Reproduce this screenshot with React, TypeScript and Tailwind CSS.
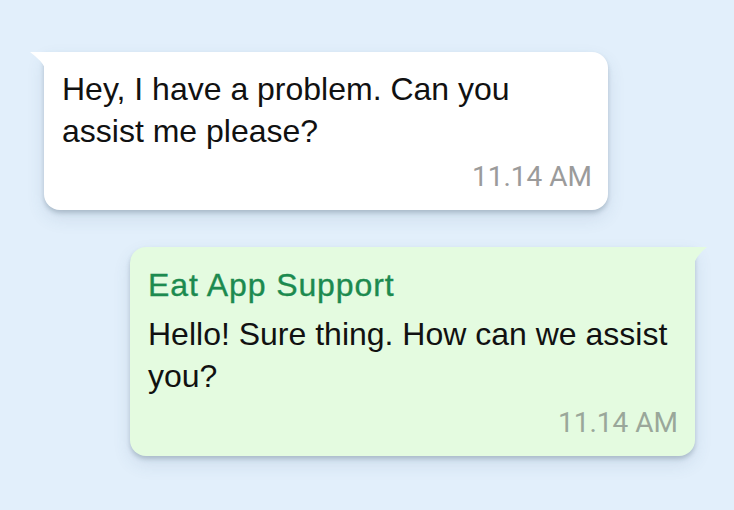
import React from "react";

export default function App() {
  return (
    <div className="w-[734px] h-[510px] bg-[#e2effb] flex flex-col overflow-hidden" style={{ fontFamily: '"Liberation Sans", Arial, sans-serif' }}>
      <div className="relative ml-[44px] mt-[52px] w-[564px] h-[158px] bg-white rounded-[16px] rounded-tl-none shadow-[0_3px_4px_rgba(60,80,100,0.25),0_8px_18px_rgba(60,90,120,0.12)] pl-[18px] pr-[16px] pt-[16px]">
        <svg className="absolute left-[-14px] top-0" width="15" height="16" viewBox="0 0 15 16">
          <path d="M0 0 H15 V16 Q12 9 0 0 Z" fill="#ffffff" />
        </svg>
        <div className="text-[32px] leading-[42px] text-[#111]">Hey, I have a problem. Can you<br />assist me please?</div>
        <div className="flex justify-end mt-[10px] text-[28px] leading-[30px] text-[#9b9b9b]" style={{ fontFamily: 'Roboto, sans-serif' }}>11.14 AM</div>
      </div>
      <div className="relative ml-[130px] mt-[37px] w-[565px] h-[209px] bg-[#e4fbe0] rounded-[16px] rounded-tr-none shadow-[0_3px_4px_rgba(60,80,100,0.25),0_8px_18px_rgba(60,90,120,0.12)] pl-[18px] pr-[17px] pt-[17px]">
        <svg className="absolute right-[-12px] top-0" width="13" height="16" viewBox="0 0 13 16">
          <path d="M0 0 H13 Q4 7 0 16 Z" fill="#e4fbe0" />
        </svg>
        <div className="text-[32px] leading-[42px] tracking-[0.9px] text-[#1c8a4f] [-webkit-text-stroke:0.35px_#1c8a4f]">Eat App Support</div>
        <div className="mt-[7px] text-[32px] leading-[42px] text-[#111]">Hello! Sure thing. How can we assist<br />you?</div>
        <div className="flex justify-end mt-[11px] text-[28px] leading-[30px] text-[#9aa79a]" style={{ fontFamily: 'Roboto, sans-serif' }}>11.14 AM</div>
      </div>
    </div>
  );
}
